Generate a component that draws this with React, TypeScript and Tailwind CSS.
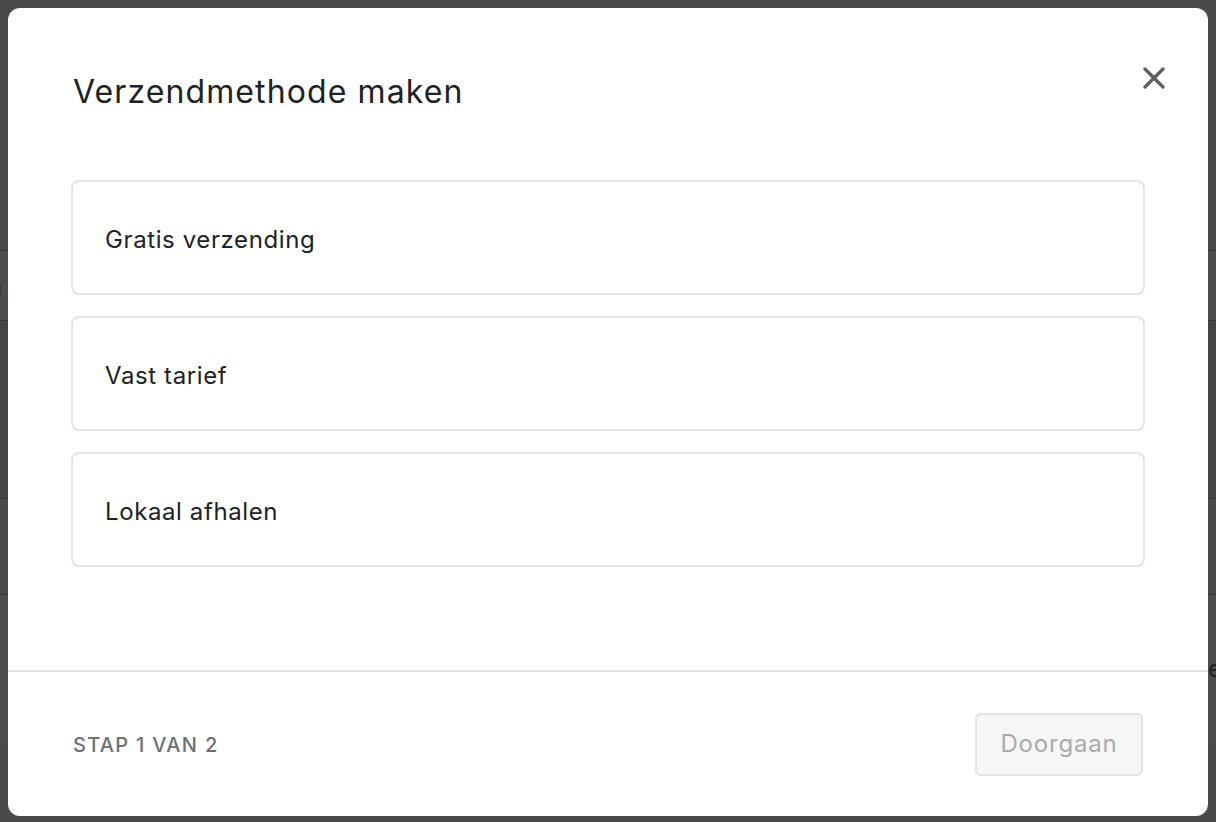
const methods = ['Gratis verzending', 'Vast tarief', 'Lokaal afhalen']

const CloseIcon = () => (
  <svg width="22" height="22" viewBox="0 0 22 22" fill="none">
    <path
      d="M2 2L20 20M20 2L2 20"
      stroke="#5c5f62"
      strokeWidth="3.2"
      strokeLinecap="round"
    />
  </svg>
)

export default function App() {
  return (
    <div className="relative h-[822px] w-full overflow-hidden bg-[#4a4a4a] font-['Inter',sans-serif]">
      {/* page behind the overlay */}
      <div className="flex flex-col">
        <div className="h-[250px]" />
        <div className="flex h-[71px] items-center border-y border-[#363636] bg-[#4d4d4d]">
          <span className="-ml-[12px] text-[24px] text-[#1f1f1f]">n</span>
        </div>
        <div className="h-[177px] bg-[#444444]" />
        <div className="h-[97px] border-y border-[#363636] bg-[#4a4a4a]" />
        <div className="flex h-[150px] items-start justify-end bg-[#4d4d4d] pt-[62px]">
          <span className="-mr-[6px] text-[24px] leading-[24px] text-[#1f1f1f]">e</span>
        </div>
      </div>

      {/* modal */}
      <div className="absolute top-2 right-2 bottom-[6px] left-2 flex flex-col rounded-xl bg-white">
        <div className="flex flex-1 flex-col px-[63px]">
          <div className="flex items-start justify-between pt-[59px] pl-[2px]">
            <h2 className="mt-[7px] text-[32px] leading-[36px] font-normal tracking-[1.1px] text-[#202223]">
              Verzendmethode maken
            </h2>
            <button className="-mr-[20px] flex h-[22px] w-[22px] items-center justify-center">
              <CloseIcon />
            </button>
          </div>

          <div className="mt-[70px] flex flex-col gap-[21px]">
            {methods.map((m) => (
              <button
                key={m}
                className="flex h-[115px] items-center rounded-lg border-2 border-[#e3e4e6] bg-white px-[32px] pt-[4px] text-left"
              >
                <span className="text-[24px] tracking-[0.6px] text-[#202223]">{m}</span>
              </button>
            ))}
          </div>
        </div>

        <div className="flex h-[146px] items-center justify-between border-t-2 border-[#e1e3e5] px-[65px]">
          <span className="pt-[2px] text-[20px] font-medium tracking-[1.3px] text-[#6d7175]">
            STAP 1 VAN 2
          </span>
          <button className="h-[63px] w-[168px] rounded-md border-2 border-[#e1e3e5] bg-[#f6f6f7] text-[24px] tracking-[0.8px] text-[#a8abae]">
            Doorgaan
          </button>
        </div>
      </div>
    </div>
  )
}
